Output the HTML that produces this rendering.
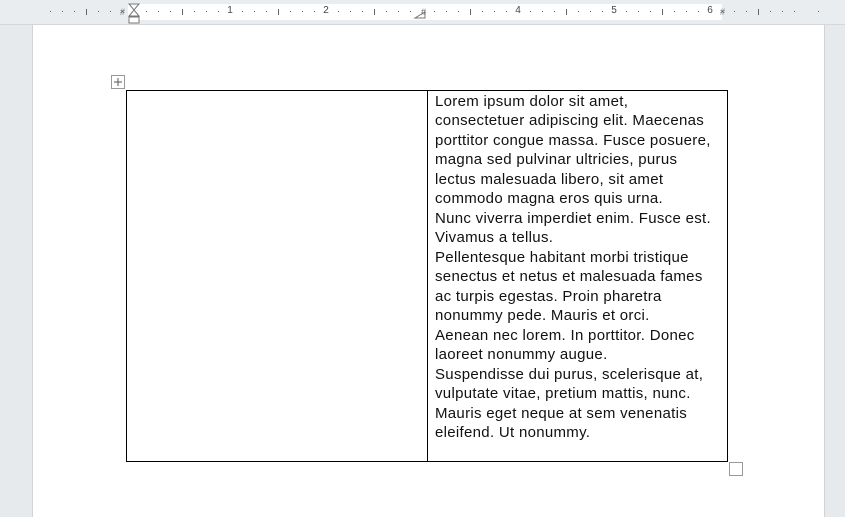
<!DOCTYPE html>
<html><head><meta charset="utf-8"><style>
body{margin:0;width:845px;height:517px;background:#e6eaed;position:relative;overflow:hidden;font-family:"Liberation Sans",sans-serif}
.ruler{position:absolute;left:0;top:0;width:845px;height:24px;background:#e9edf0;border-bottom:1px solid #d4d8db}
.rw{position:absolute;left:128px;top:4px;width:594px;height:16px;background:#fff}
.t{position:absolute;background:#666;width:1px}
.n{position:absolute;top:5px;font-size:10px;color:#444;width:10px;text-align:center}
.page{position:absolute;left:32px;top:25px;width:791px;height:492px;background:#fff;border-left:1px solid #d0d4d7;border-right:1px solid #d0d4d7}
.tbl{position:absolute;left:126px;top:90px;width:600px;height:370px;border:1px solid #000}
.mid{position:absolute;left:427px;top:90px;width:1px;height:372px;background:#000}
.txt{position:absolute;left:435px;top:92px;font-size:15px;letter-spacing:0.3px;line-height:19.47px;color:#111;white-space:nowrap}
</style></head><body>
<div class="ruler"><div class="rw"></div>
<div id="tk"></div>
<div class="n" style="left:225px">1</div><div class="n" style="left:321px">2</div><div class="n" style="left:513px">4</div><div class="n" style="left:609px">5</div><div class="n" style="left:705px">6</div>
<svg style="position:absolute;left:0;top:0" width="845" height="25">
<path d="M129 4h10l-5 6z M129 16h10l-5-6z" fill="#fff" stroke="#777"/>
<rect x="129" y="17" width="10" height="6" fill="#fff" stroke="#777"/>
<path d="M415 18h10v-6z" fill="#fff" stroke="#777"/>
<text x="120" y="15" font-size="9" fill="#666">#</text><text x="421" y="15" font-size="9" fill="#666">#</text><text x="720" y="15" font-size="9" fill="#666">#</text>
</svg>
</div>
<div class="page"></div>
<svg style="position:absolute;left:111px;top:75px" width="14" height="14"><rect x="0.5" y="0.5" width="13" height="13" fill="#fff" stroke="#999"/><path d="M7 3v8M3 7h8" stroke="#555"/></svg>
<div class="tbl"></div><div class="mid"></div>
<div style="position:absolute;left:729px;top:462px;width:12px;height:12px;border:1px solid #999;background:#fff"></div>
<div class="txt">Lorem ipsum dolor sit amet,<br>consectetuer adipiscing elit. Maecenas<br>porttitor congue massa. Fusce posuere,<br>magna sed pulvinar ultricies, purus<br>lectus malesuada libero, sit amet<br>commodo magna eros quis urna.<br>Nunc viverra imperdiet enim. Fusce est.<br>Vivamus a tellus.<br>Pellentesque habitant morbi tristique<br>senectus et netus et malesuada fames<br>ac turpis egestas. Proin pharetra<br>nonummy pede. Mauris et orci.<br>Aenean nec lorem. In porttitor. Donec<br>laoreet nonummy augue.<br>Suspendisse dui purus, scelerisque at,<br>vulputate vitae, pretium mattis, nunc.<br>Mauris eget neque at sem venenatis<br>eleifend. Ut nonummy.</div>
<script>
var h='';for(var x=38;x<820;x+=12){var k=Math.round((x-134)/12);if(((k%8)+8)%8==0)continue;var big=((k%4)+4)%4==0;h+='<div class="t" style="left:'+x+'px;top:'+(big?9:11)+'px;height:'+(big?6:1)+'px"></div>';}
document.getElementById('tk').innerHTML=h;
</script>
</body></html>
